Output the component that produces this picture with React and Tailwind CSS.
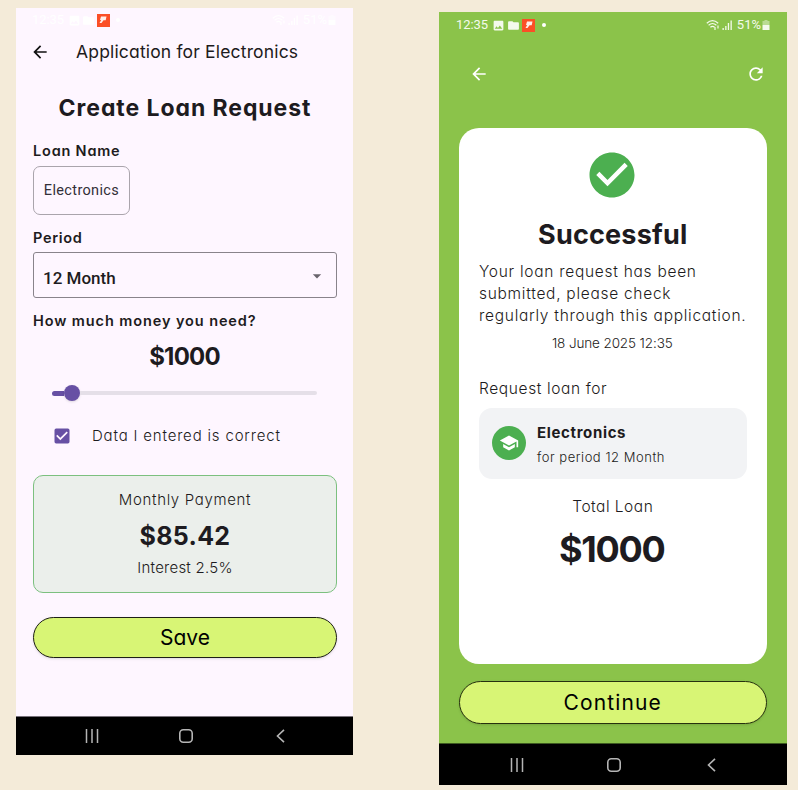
import React from "react";
import {
  MdArrowBack,
  MdArrowDropDown,
  MdCheckBox,
  MdCheckCircle,
  MdFolder,
  MdImage,
  MdRefresh,
  MdSchool,
} from "react-icons/md";

function StatusBar({ className, gap, faint }) {
  return (
    <div className={`flex items-center justify-between font-['Roboto',sans-serif] ${faint ? "text-white" : "text-[#f4faec]"} ${className}`}>
      <div className={`flex items-center ${gap}`}>
        <span className="w-[34px] text-[13px] leading-4 tracking-[-0.1px]">12:35</span>
        <MdImage className="size-[13px]" />
        <MdFolder className="size-[13px]" />
        <span className="flex size-[13px] items-center justify-center bg-[#fb4f26]">
          <svg viewBox="0 0 12 12" className="size-3" fill="#fff">
            <path d="M4 2.500h5.500l-.8 3.800H6.500L4.500 9H2.500l1.700-3H3z" opacity=".9" />
          </svg>
        </span>
        <span className="ml-[5px] size-1 rounded-full bg-white" />
      </div>
      <div className="flex items-center">
        <svg viewBox="0 0 15 12" className="h-3 w-[15px]" fill="none" stroke="currentColor" strokeWidth="1.200">
          <path d="M.8 4.200Q6.500-1 12.200 4.200M2.600 6.200Q6.500 2.800 10.400 6.200M4.400 8.200q2.100-1.800 4.200 0" />
          <path d="M9 8v3M12 6.500v3" />
        </svg>
        <svg viewBox="0 0 13 12" className="mr-[3px] h-3 w-[13px]" fill="currentColor">
          <path d="M1.500 9h1.300v2H1.500zM4.200 7h1.300v4H4.200zM6.800 4h1.300v7H6.800zM9.500 1.500h1.300V11H9.500z" />
        </svg>
        <span className="text-[13px] leading-4">51%</span>
        <svg viewBox="0 0 8 12" className="ml-px h-3 w-2" fill="currentColor">
          <path d="M2.500 1h3v1H7.500v4h-7V2h2z" opacity=".45" />
          <path d="M.5 6h7v5h-7z" />
        </svg>
      </div>
    </div>
  );
}

function NavBar({ className }) {
  return (
    <div className={`flex items-center justify-between bg-black text-[#b5b5b5] ${className}`}>
      <svg viewBox="0 0 14 14" className="size-[14px]" fill="none" stroke="currentColor" strokeWidth="1.500">
        <path d="M1.500 0v14M7 0v14M12.500 0v14" />
      </svg>
      <svg viewBox="0 0 14 14" className="-ml-1 size-[14px]" fill="none" stroke="currentColor" strokeWidth="1.600">
        <rect x=".8" y=".8" width="12.400" height="12.400" rx="3.500" />
      </svg>
      <svg viewBox="0 0 9 14" className="h-[14px] w-[9px]" fill="none" stroke="currentColor" strokeWidth="1.600">
        <path d="M8 .8 1.500 7 8 13.200" />
      </svg>
    </div>
  );
}

function LoanForm() {
  return (
    <section className="mt-2 flex h-[747px] w-[337px] flex-col bg-[#fef6ff]">
      <StatusBar faint className="mt-1 h-4 pl-[16px] pr-[17px]" gap="gap-[1.500px]" />
      <div className="mt-2 flex h-8 items-center pl-[14px]">
        <MdArrowBack className="size-5 text-[#111]" />
        <span className="ml-[26px] whitespace-nowrap text-[17.500px] tracking-[0.170px]">Application for Electronics</span>
      </div>
      <div className="flex flex-1 flex-col pl-[17px] pr-[16px]">
        <h1 className="mt-[24px] whitespace-nowrap text-center text-[23px] font-bold leading-8 tracking-[0.930px]">Create Loan Request</h1>
        <label className="mt-[17px] text-[14.500px] font-semibold leading-5 tracking-[0.800px]">Loan Name</label>
        <div className="mt-[5px] flex h-[49px] w-[97px] items-center justify-center rounded-[7px] border border-[#aaa4ac] font-['Roboto',sans-serif] text-[14.500px] tracking-[0.350px] text-[#333038]">
          Electronics
        </div>
        <label className="mt-[13px] text-[14.500px] font-semibold leading-5 tracking-[0.700px]">Period</label>
        <div className="mt-[4px] flex h-[46px] items-center justify-between rounded-[3px] border border-[#89838b] pl-[9px] pr-[9px] font-['Roboto',sans-serif]">
          <span className="mt-[7px] text-[17px] font-medium">12 Month</span>
          <MdArrowDropDown className="mt-px size-5 text-[#69646c]" />
        </div>
        <label className="mt-[13px] whitespace-nowrap text-[14.500px] font-semibold leading-5 tracking-[0.900px]">How much money you need?</label>
        <div className="mt-[10px] pr-px text-center text-[24px] font-bold leading-[32px] tracking-[-0.800px]">$1000</div>
        <div className="ml-[19px] mr-[20px] mt-[11px] flex h-[18px] items-center">
          <span className="h-[5px] w-3 rounded-l-full bg-[#6750a4]" />
          <span className="size-4 rounded-full bg-[#6750a4] shadow-sm" />
          <span className="h-1 flex-1 rounded-r-full bg-[#e5dfe8]" />
        </div>
        <div className="mt-[24px] flex h-5 items-center pl-[19px]">
          <MdCheckBox className="size-5 text-[#6750a4]" />
          <span className="ml-[20px] whitespace-nowrap text-[15px] font-[350] tracking-[0.820px]">Data I entered is correct</span>
        </div>
        <div className="mt-[29px] flex h-[118px] flex-col items-center rounded-[10px] border border-[#7cc07f] bg-[#ebefeb]">
          <span className="mt-[14px] text-[15px] font-[350] leading-5 tracking-[0.670px]">Monthly Payment</span>
          <span className="mt-[10px] text-[25px] font-bold leading-8 tracking-[0.300px]">$85.42</span>
          <span className="mt-[6px] text-[15px] font-[350] leading-5 tracking-[0.240px]">Interest 2.5%</span>
        </div>
        <button className="mt-6 h-[41px] rounded-full border border-[#1d1f16] bg-[#d8f575] text-[21px] text-black shadow-sm">Save</button>
      </div>
      <NavBar className="h-[39px] border-t border-[#77717a] pl-[69px] pr-[68px]" />
    </section>
  );
}

function LoanResult() {
  return (
    <section className="ml-[86px] mt-3 flex h-[773px] w-[348px] flex-col bg-[#8bc34a]">
      <StatusBar className="mt-[5px] h-4 pl-[17px] pr-[17px]" gap="gap-[2px]" />
      <div className="mt-[31px] flex h-5 items-center justify-between pl-[30px] pr-[21px] text-white">
        <MdArrowBack className="size-5" />
        <MdRefresh className="size-5" />
      </div>
      <div className="ml-5 mr-[20.500px] mt-11 flex h-[536px] flex-col rounded-[20px] bg-white px-5">
        <MdCheckCircle className="mr-px mt-5 size-[54px] self-center text-[#4caf50]" />
        <h2 className="mt-[17px] text-center text-[27px] font-bold leading-8 tracking-[0.200px]">Successful</h2>
        <p className="mt-[10px] whitespace-nowrap text-[15.500px] font-[350] leading-[22px] tracking-[0.720px]">
          Your loan request has been
          <br />
          submitted, please check
          <br />
          regularly through this application.
        </p>
        <div className="mt-[6px] pr-px text-center text-[13.500px] font-[350] leading-5 tracking-[-0.120px]">18 June 2025 12:35</div>
        <div className="mt-[26px] text-[15.500px] font-[350] leading-5 tracking-[0.620px]">Request loan for</div>
        <div className="mt-[9px] flex h-[70.500px] items-center rounded-[13px] bg-[#f2f3f5] pl-[13px]">
          <span className="flex size-[34px] items-center justify-center rounded-full bg-[#4caf50] text-white">
            <MdSchool className="size-5" />
          </span>
          <div className="ml-[11px] mt-[3px] flex flex-col">
            <span className="text-[15px] font-bold leading-5 tracking-[0.650px]">Electronics</span>
            <span className="mt-1 text-[13px] font-[350] leading-5 tracking-[0.530px]">for period 12 Month</span>
          </div>
        </div>
        <div className="mt-[18.500px] text-center text-[15.500px] font-[350] leading-5 tracking-[0.500px]">Total Loan</div>
        <div className="mt-[12px] pr-[2px] text-center text-[36px] font-bold leading-10 tracking-[-1.300px]">$1000</div>
      </div>
      <button className="ml-5 mr-[20.500px] mt-[17px] h-[43px] rounded-full border border-[#26310f] bg-[#d8f575] text-[21px] tracking-[1.150px] text-black shadow-sm">Continue</button>
      <NavBar className="mt-auto h-[42px] border-t border-[#3d5a20] pl-[71px] pr-[71px]" />
    </section>
  );
}

export default function App() {
  return (
    <main className="flex h-[790px] w-[798px] items-start overflow-hidden bg-[#f4ebd9] pl-4 font-['Inter',sans-serif] text-[#1d1b20] [font-feature-settings:'cv11']">
      <LoanForm />
      <LoanResult />
    </main>
  );
}
